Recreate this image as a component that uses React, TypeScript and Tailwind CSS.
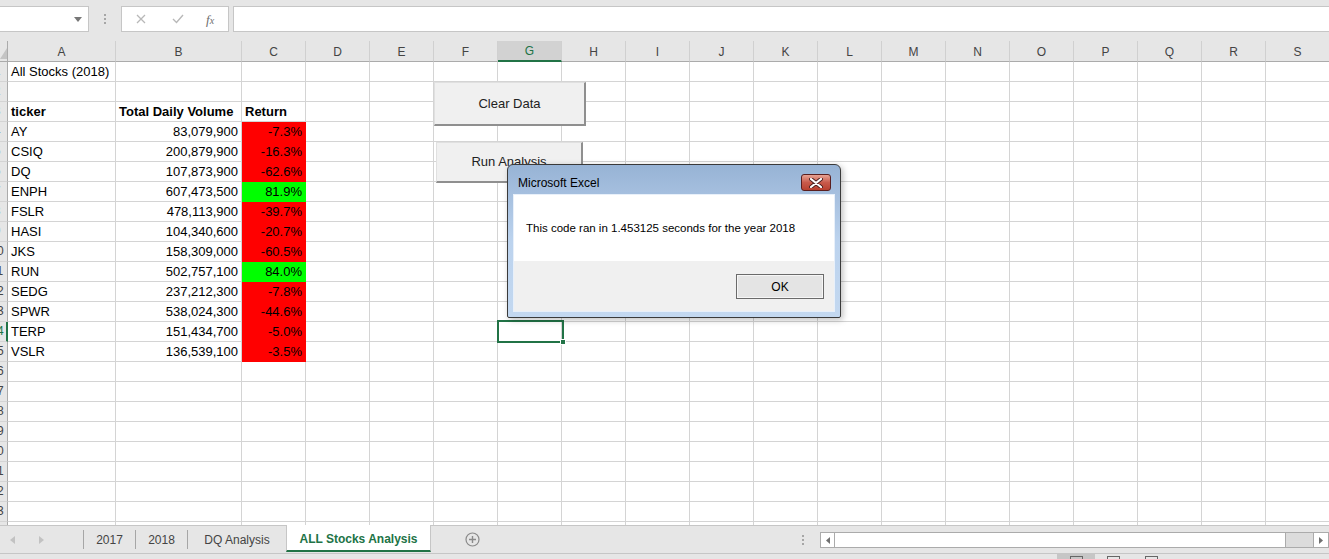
import React from "react";

const COLS = ["A", "B", "C", "D", "E", "F", "G", "H", "I", "J", "K", "L", "M", "N", "O", "P", "Q", "R", "S"];

const stocks: [string, string, string, boolean][] = [
  ["AY", "83,079,900", "-7.3%", false],
  ["CSIQ", "200,879,900", "-16.3%", false],
  ["DQ", "107,873,900", "-62.6%", false],
  ["ENPH", "607,473,500", "81.9%", true],
  ["FSLR", "478,113,900", "-39.7%", false],
  ["HASI", "104,340,600", "-20.7%", false],
  ["JKS", "158,309,000", "-60.5%", false],
  ["RUN", "502,757,100", "84.0%", true],
  ["SEDG", "237,212,300", "-7.8%", false],
  ["SPWR", "538,024,300", "-44.6%", false],
  ["TERP", "151,434,700", "-5.0%", false],
  ["VSLR", "136,539,100", "-3.5%", false],
];

function colWidth(i: number) {
  if (i === 0) return "w-[108px]";
  if (i === 1) return "w-[126px]";
  return "w-[64px]";
}

type CellData = { text?: string; right?: boolean; bold?: boolean; fill?: "red" | "green" };

function getCell(r: number, c: number): CellData {
  if (r === 1 && c === 0) return { text: "All Stocks (2018)" };
  if (r === 3) {
    if (c === 0) return { text: "ticker", bold: true };
    if (c === 1) return { text: "Total Daily Volume", bold: true };
    if (c === 2) return { text: "Return", bold: true };
  }
  if (r >= 4 && r <= 15) {
    const s = stocks[r - 4];
    if (c === 0) return { text: s[0] };
    if (c === 1) return { text: s[1], right: true };
    if (c === 2) return { text: s[2], right: true, fill: s[3] ? "green" : "red" };
  }
  return {};
}

function RowHead({ n }: { n: number }) {
  const sel = n === 14;
  return (
    <div
      className={`w-[8px] shrink-0 overflow-hidden bg-[#e6e6e6] border-b border-[#d4d4d4] ${
        sel ? "border-r-2 border-r-[#217346]" : "border-r border-r-[#ababab]"
      }`}
    >
      <div
        className={`w-[26px] -ml-[16px] text-center text-[12px] leading-[19px] ${
          sel ? "text-[#217346]" : "text-[#444]"
        }`}
      >
        {n}
      </div>
    </div>
  );
}

function GridRow({ r }: { r: number }) {
  return (
    <div className="flex h-[20px] shrink-0">
      <RowHead n={r} />
      {COLS.map((_, c) => {
        const d = getCell(r, c);
        const fill =
          d.fill === "red"
            ? "bg-[#ff0000] border-[#ff0000]"
            : d.fill === "green"
            ? "bg-[#00ff00] border-[#00ff00]"
            : "bg-white border-[#d4d4d4]";
        return (
          <div
            key={c}
            className={`${colWidth(c)} shrink-0 border-r border-b ${fill} overflow-hidden whitespace-nowrap px-[3px] text-[13px] leading-[19px] ${
              d.right ? "text-right" : "text-left"
            } ${d.bold ? "font-bold" : ""}`}
          >
            {d.text}
          </div>
        );
      })}
    </div>
  );
}

export default function App() {
  const rows = Array.from({ length: 23 }, (_, i) => i + 1);
  return (
    <div className="relative w-[1329px] h-[559px] overflow-hidden bg-[#e6e6e6] text-black font-['Liberation_Sans',Arial,sans-serif] flex flex-col">
      {/* formula bar */}
      <div className="h-[41px] shrink-0 flex items-start pt-[6px]">
        <div className="w-[89px] h-[26px] bg-white border-y border-r border-[#c6c6c6] flex items-center justify-end pr-[6px]">
          <svg width="8" height="5" viewBox="0 0 8 5">
            <path d="M0 0 H8 L4 5 Z" fill="#777" />
          </svg>
        </div>
        <div className="w-[32px] h-[26px] flex flex-col items-center justify-center gap-[2px]">
          <div className="w-[2px] h-[2px] bg-[#a6a6a6]" />
          <div className="w-[2px] h-[2px] bg-[#a6a6a6]" />
          <div className="w-[2px] h-[2px] bg-[#a6a6a6]" />
        </div>
        <div className="w-[108px] h-[26px] bg-white border border-[#c6c6c6] flex items-center">
          <svg className="ml-[14px]" width="10" height="10" viewBox="0 0 10 10">
            <path d="M1 1 L9 9 M9 1 L1 9" stroke="#b8b8b8" strokeWidth="1.3" />
          </svg>
          <svg className="ml-[26px]" width="12" height="10" viewBox="0 0 12 10">
            <path d="M1 5 L4.5 8.5 L11 1" stroke="#b8b8b8" strokeWidth="1.4" fill="none" />
          </svg>
          <span className="ml-[22px] italic text-[13px] text-[#6e6e6e] font-['Liberation_Serif',serif] leading-none">
            f<span className="text-[10px]">x</span>
          </span>
        </div>
        <div className="ml-[4px] flex-1 h-[26px] bg-white border-y border-l border-[#c6c6c6]" />
      </div>

      {/* column headers */}
      <div className="h-[21px] shrink-0 flex">
        <div className="w-[8px] shrink-0 border-r border-b border-[#ababab] flex items-end pb-[2px]">
          <svg width="7" height="11" viewBox="0 0 7 11">
            <path d="M7 0 V11 H0 Z" fill="#c4c4c4" />
          </svg>
        </div>
        {COLS.map((l, i) => (
          <div
            key={l}
            className={`${colWidth(i)} shrink-0 border-r border-r-[#d0d0d0] flex items-center justify-center pt-[1px] text-[12px] ${
              l === "G"
                ? "bg-[#d2d2d2] text-[#217346] border-b-2 border-b-[#217346]"
                : "text-[#444] border-b border-b-[#ababab]"
            }`}
          >
            {l}
          </div>
        ))}
      </div>

      {/* grid */}
      <div className="h-[463px] shrink-0 flex flex-col overflow-hidden">
        {rows.map((r) => (
          <GridRow key={r} r={r} />
        ))}
        <div className="flex h-[3px] shrink-0">
          <div className="w-[8px] shrink-0 bg-[#e6e6e6] border-r border-[#ababab]" />
          {COLS.map((l, i) => (
            <div key={l} className={`${colWidth(i)} shrink-0 bg-white border-r border-[#d4d4d4]`} />
          ))}
        </div>
      </div>

      {/* sheet tabs */}
      <div className="h-[28px] shrink-0 flex items-stretch border-t border-[#c6c6c6] text-[12px]">
        <div className="w-[83px] flex items-center">
          <svg className="ml-[10px]" width="5" height="8" viewBox="0 0 5 8">
            <path d="M5 0 V8 L0 4 Z" fill="#c2c2c2" />
          </svg>
          <svg className="ml-[24px]" width="5" height="8" viewBox="0 0 5 8">
            <path d="M0 0 V8 L5 4 Z" fill="#c2c2c2" />
          </svg>
        </div>
        <div className="w-px my-[4px] bg-[#a6a6a6]" />
        <div className="w-[51px] flex items-center justify-center text-[#444]">2017</div>
        <div className="w-px my-[4px] bg-[#a6a6a6]" />
        <div className="w-[51px] flex items-center justify-center text-[#444]">2018</div>
        <div className="w-px my-[4px] bg-[#a6a6a6]" />
        <div className="w-[98px] flex items-center justify-center text-[#444]">DQ Analysis</div>
        <div className="w-[145px] -mt-px mb-px pt-[2px] bg-white border-x border-[#c6c6c6] border-b-2 border-b-[#217346] flex items-center justify-center font-bold text-[#217346]">
          ALL Stocks Analysis
        </div>
        <div className="w-[34px]" />
        <div className="flex items-center">
          <svg width="15" height="15" viewBox="0 0 15 15">
            <circle cx="7.5" cy="7.5" r="6.5" stroke="#8a8a8a" strokeWidth="1.2" fill="none" />
            <path d="M7.5 4 V11 M4 7.5 H11" stroke="#8a8a8a" strokeWidth="1.4" />
          </svg>
        </div>
        <div className="w-[321px]" />
        <div className="w-[4px] flex flex-col items-center justify-center gap-[2px]">
          <div className="w-[2px] h-[2px] bg-[#a6a6a6]" />
          <div className="w-[2px] h-[2px] bg-[#a6a6a6]" />
          <div className="w-[2px] h-[2px] bg-[#a6a6a6]" />
        </div>
        <div className="w-[15px]" />
        <div className="w-[509px] h-[16px] mt-[6px] border border-[#ababab] bg-white flex">
          <div className="w-[14px] border-r border-[#ababab] flex items-center justify-center">
            <svg width="4" height="7" viewBox="0 0 4 7">
              <path d="M4 0 V7 L0 3.5 Z" fill="#707070" />
            </svg>
          </div>
          <div className="flex-1 bg-white border-r border-[#ababab]" />
          <div className="w-[27px] bg-[#dcdcdc]" />
          <div className="w-[15px] border-l border-[#ababab] flex items-center justify-center">
            <svg width="4" height="7" viewBox="0 0 4 7">
              <path d="M0 0 V7 L4 3.5 Z" fill="#707070" />
            </svg>
          </div>
        </div>
      </div>

      {/* status bar */}
      <div className="h-[6px] shrink-0 border-t border-[#c6c6c6] flex">
        <div className="w-[1057px]" />
        <div className="w-[38px] bg-[#c6c6c6] flex justify-center pt-[2px]">
          <div className="w-[13px] h-[6px] border-x border-t border-[#666]" />
        </div>
        <div className="w-[12px]" />
        <div className="w-[13px] h-[6px] mt-[2px] border-x border-t border-[#666]" />
        <div className="w-[25px]" />
        <div className="w-[13px] h-[6px] mt-[2px] border-x border-t border-[#666]" />
      </div>

      {/* selected cell G14 */}
      <div className="absolute left-[497px] top-[320px] w-[67px] h-[23px] border-2 border-[#217346]" />
      <div className="absolute left-[560px] top-[339px] w-[6px] h-[6px] bg-[#217346] border border-white" />

      {/* sheet buttons */}
      <div className="absolute left-[434px] top-[82px] w-[152px] h-[44px] bg-[#f0f0f0] border-t border-l border-t-[#e0e0e0] border-l-[#e0e0e0] border-r-2 border-b-2 border-r-[#8f8f8f] border-b-[#8f8f8f] flex items-center justify-center text-[13px] text-[#222]">
        Clear Data
      </div>
      <div className="absolute left-[436px] top-[142px] w-[147px] h-[41px] bg-[#f0f0f0] border-t border-l border-t-[#e0e0e0] border-l-[#e0e0e0] border-r-2 border-b-2 border-r-[#8f8f8f] border-b-[#8f8f8f] flex items-center justify-center text-[13px] text-[#222]">
        Run Analysis
      </div>

      {/* message box */}
      <div className="absolute left-[507px] top-[164px] w-[334px] h-[154px] border border-[#3a3a3a] rounded-t-[6px] rounded-b-[2px] bg-gradient-to-b from-[#97b3d5] via-[#bcd3ee] to-[#c3d8f0] px-[5px] flex flex-col shadow-[2px_2px_6px_rgba(0,0,0,0.25)]">
        <div className="h-[29px] shrink-0 flex items-center pt-[7px] pl-[5px] text-[12px] text-black">Microsoft Excel</div>
        <div className="absolute left-[293px] top-[9px] w-[30px] h-[17px] rounded-[3px] border border-[#5a1e1e] bg-gradient-to-b from-[#e6a293] via-[#c85a4b] to-[#b8402f] flex items-center justify-center">
          <svg width="14" height="10" viewBox="0 0 14 10">
            <path d="M2 1 L12 9 M12 1 L2 9" stroke="#4a2020" strokeWidth="4" strokeLinecap="round" />
            <path d="M2 1 L12 9 M12 1 L2 9" stroke="#ffffff" strokeWidth="2.2" strokeLinecap="round" />
          </svg>
        </div>
        <div className="border border-[#e8f0fa] flex flex-col">
          <div className="h-[66px] bg-white flex items-center pl-[12px] text-[11.5px] pt-[2px]">
            This code ran in 1.453125 seconds for the year 2018
          </div>
          <div className="h-[50px] bg-[#f0f0f0] flex justify-end items-start pt-[13px] pr-[10px]">
            <div className="w-[88px] h-[25px] bg-[#e4e4e4] border border-[#6a6a6a] shadow-[inset_0_0_0_1px_#f6f6f6] flex items-center justify-center text-[12px]">
              OK
            </div>
          </div>
        </div>
      </div>
    </div>
  );
}
